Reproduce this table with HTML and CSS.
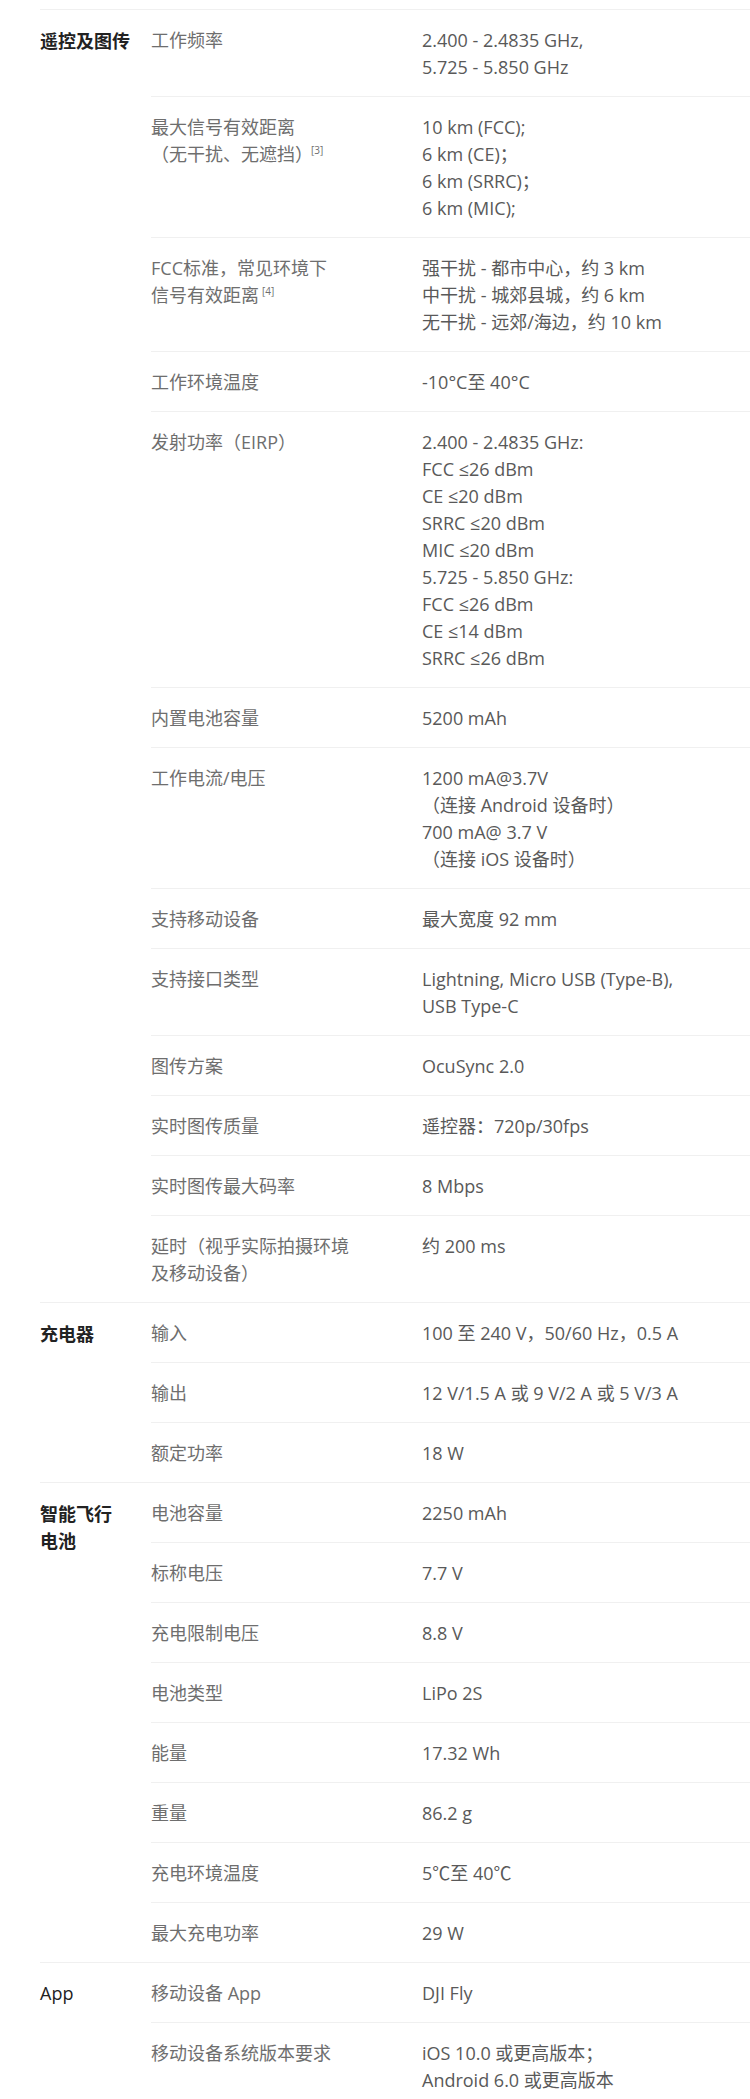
FILE: index.html
```html
<!DOCTYPE html>
<html lang="zh-CN">
<head>
    <meta charset="UTF-8">
    <meta name="viewport" content="width=device-width, initial-scale=1.0">
    <link rel="stylesheet" href="styles.css">
</head>
<body>

<div id="specs">

    <div class="group">
        <div class="category">遥控及图传</div>
        <div class="rows">
            <div class="row">
                <div class="label">工作频率</div>
                <div class="value">2.400 - 2.4835 GHz,<br>5.725 - 5.850 GHz</div>
            </div>
            <div class="row">
                <div class="label">最大信号有效距离<br>（无干扰、无遮挡）<sup class="tight">[3]</sup></div>
                <div class="value">10 km (FCC);<br>6 km (CE)；<br>6 km (SRRC)；<br>6 km (MIC);</div>
            </div>
            <div class="row">
                <div class="label">FCC标准，常见环境下<br>信号有效距离<sup>[4]</sup></div>
                <div class="value">强干扰 - 都市中心，约 3 km<br>中干扰 - 城郊县城，约 6 km<br>无干扰 - 远郊/海边，约 10 km</div>
            </div>
            <div class="row">
                <div class="label">工作环境温度</div>
                <div class="value">-10°C至 40°C</div>
            </div>
            <div class="row">
                <div class="label">发射功率（EIRP）</div>
                <div class="value">2.400 - 2.4835 GHz:<br>FCC ≤26 dBm<br>CE ≤20 dBm<br>SRRC ≤20 dBm<br>MIC ≤20 dBm<br>5.725 - 5.850 GHz:<br>FCC ≤26 dBm<br>CE ≤14 dBm<br>SRRC ≤26 dBm</div>
            </div>
            <div class="row">
                <div class="label">内置电池容量</div>
                <div class="value">5200 mAh</div>
            </div>
            <div class="row">
                <div class="label">工作电流/电压</div>
                <div class="value">1200 mA@3.7V<br>（连接 Android 设备时）<br>700 mA@ 3.7 V<br>（连接 iOS 设备时）</div>
            </div>
            <div class="row">
                <div class="label">支持移动设备</div>
                <div class="value">最大宽度 92 mm</div>
            </div>
            <div class="row">
                <div class="label">支持接口类型</div>
                <div class="value">Lightning, Micro USB (Type-B), USB Type-C</div>
            </div>
            <div class="row">
                <div class="label">图传方案</div>
                <div class="value">OcuSync 2.0</div>
            </div>
            <div class="row">
                <div class="label">实时图传质量</div>
                <div class="value">遥控器：720p/30fps</div>
            </div>
            <div class="row">
                <div class="label">实时图传最大码率</div>
                <div class="value">8 Mbps</div>
            </div>
            <div class="row">
                <div class="label">延时（视乎实际拍摄环境<br>及移动设备）</div>
                <div class="value">约 200 ms</div>
            </div>
        </div>
    </div>

    <div class="group">
        <div class="category">充电器</div>
        <div class="rows">
            <div class="row">
                <div class="label">输入</div>
                <div class="value">100 至 240 V，50/60 Hz，0.5 A</div>
            </div>
            <div class="row">
                <div class="label">输出</div>
                <div class="value">12 V/1.5 A 或 9 V/2 A 或 5 V/3 A</div>
            </div>
            <div class="row">
                <div class="label">额定功率</div>
                <div class="value">18 W</div>
            </div>
        </div>
    </div>

    <div class="group">
        <div class="category">智能飞行<br>电池</div>
        <div class="rows">
            <div class="row">
                <div class="label">电池容量</div>
                <div class="value">2250 mAh</div>
            </div>
            <div class="row">
                <div class="label">标称电压</div>
                <div class="value">7.7 V</div>
            </div>
            <div class="row">
                <div class="label">充电限制电压</div>
                <div class="value">8.8 V</div>
            </div>
            <div class="row">
                <div class="label">电池类型</div>
                <div class="value">LiPo 2S</div>
            </div>
            <div class="row">
                <div class="label">能量</div>
                <div class="value">17.32 Wh</div>
            </div>
            <div class="row">
                <div class="label">重量</div>
                <div class="value">86.2 g</div>
            </div>
            <div class="row">
                <div class="label">充电环境温度</div>
                <div class="value">5℃至 40℃</div>
            </div>
            <div class="row">
                <div class="label">最大充电功率</div>
                <div class="value">29 W</div>
            </div>
        </div>
    </div>

    <div class="group">
        <div class="category app">App</div>
        <div class="rows">
            <div class="row">
                <div class="label">移动设备 App</div>
                <div class="value">DJI Fly</div>
            </div>
            <div class="row">
                <div class="label">移动设备系统版本要求</div>
                <div class="value">iOS 10.0 或更高版本；<br>Android 6.0 或更高版本</div>
            </div>
        </div>
    </div>

</div>

</body>
</html>
```

FILE: styles.css
```css
body {
    margin: 0;
    background: #fff;
    font-family: "Open Sans", "Noto Sans CJK SC", sans-serif;
    font-size: 18px;
    line-height: 27px;
}
#specs {
    padding: 9px 0 0 40px;
}
.group {
    display: grid;
    grid-template-columns: 111px 1fr;
    border-top: 1px solid #f0f0f0;
}
.category {
    padding: 17px 0 15px;
    color: #222;
    font-weight: 700;
    font-family: "Noto Sans CJK SC", sans-serif;
}
.category.app {
    font-family: "Open Sans", sans-serif;
    font-weight: 400;
}
.row {
    display: grid;
    grid-template-columns: 271px 1fr;
    padding: 17px 0 15px;
}
.row + .row {
    border-top: 1px solid #f0f0f0;
}
.label {
    color: #6e6e6e;
}
.value {
    color: #595959;
    padding-right: 40px;
}
sup {
    font-size: 10px;
    line-height: 0;
    vertical-align: 7px;
    margin-left: 3px;
}
sup.tight {
    margin-left: -2px;
}
```
